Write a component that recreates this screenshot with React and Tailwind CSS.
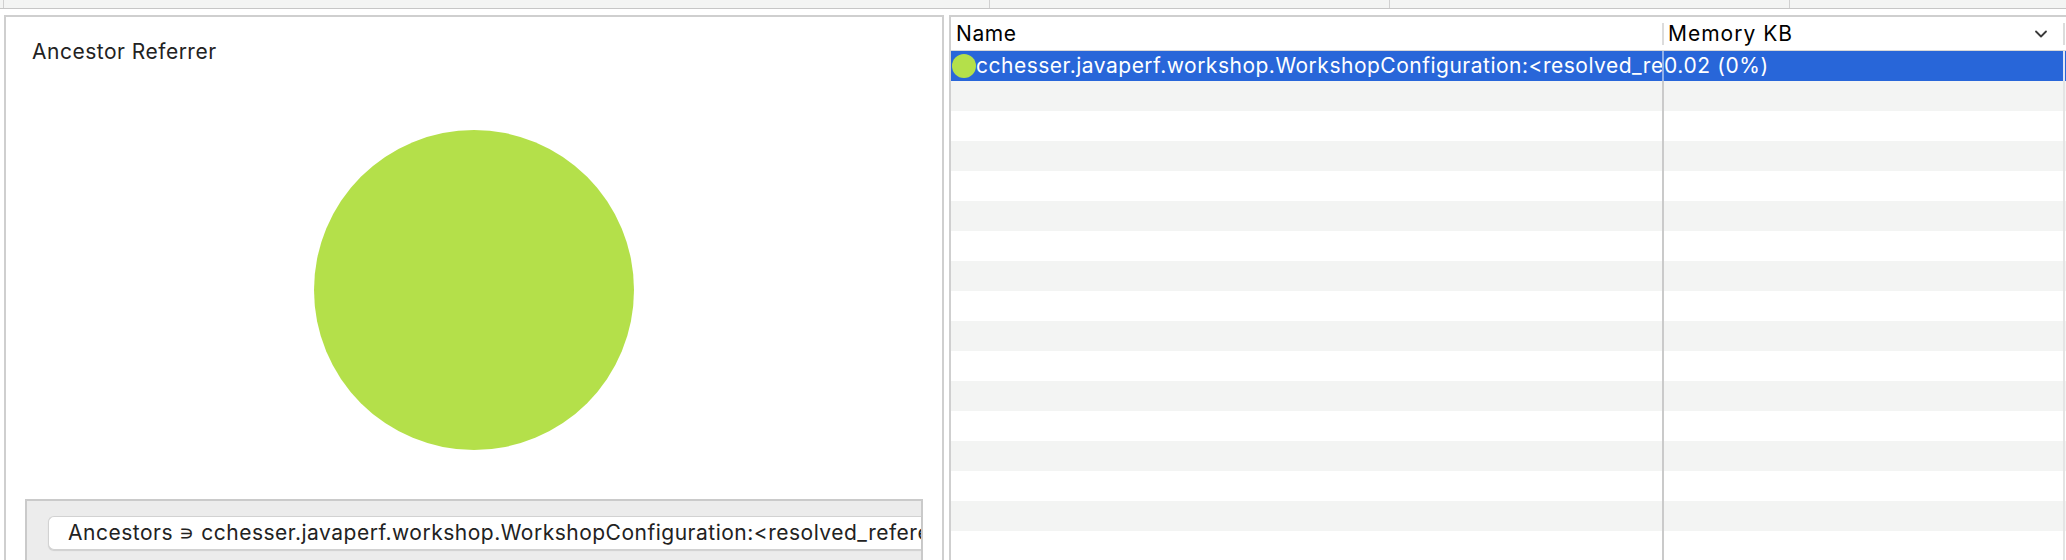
import { ChevronDown } from "lucide-react";

const font = { fontFamily: "Inter, 'Noto Sans', sans-serif" };

function Row({ index }) {
  const selected = index === 0;
  const stripe = index % 2 === 1;
  const bg = selected ? "bg-[#2866d9]" : stripe ? "bg-[#f3f4f3]" : "bg-white";
  return (
    <div className={`flex h-[30px] shrink-0 items-center ${bg}`}>
      <div className="flex h-full w-[711px] shrink-0 items-center overflow-hidden whitespace-nowrap">
        {selected && (
          <>
            <span className="ml-[1px] h-[24px] w-[24px] shrink-0 rounded-full bg-[#b4e04a]" />
            <span className="text-[21px] tracking-[0.5px] text-white">
              cchesser.javaperf.workshop.WorkshopConfiguration:&lt;resolved_reference&gt;
            </span>
          </>
        )}
      </div>
      <div className={`h-full w-[2px] shrink-0 ${selected ? "bg-[#8fb0ea]" : "bg-[#cacaca]"}`} />
      <div className="flex h-full w-[399px] shrink-0 items-center whitespace-nowrap">
        {selected && <span className="text-[21px] tracking-[0.6px] text-white">0.02 (0%)</span>}
      </div>
      <div className={`h-full w-[2px] shrink-0 ${selected ? "bg-[#dfe6f5]" : "bg-[#e4e4e4]"}`} />
    </div>
  );
}

export default function App() {
  const rows = Array.from({ length: 17 }, (_, i) => i);

  return (
    <div className="h-[560px] w-[2066px] overflow-hidden bg-white text-[#1d1d1d]" style={font}>
      {/* top strip */}
      <div className="flex h-[9px] border-b border-[#c6c6c6] bg-[#f3f4f3]">
        <div className="ml-[3px] w-[987px] border-l border-r border-[#d0d0d0]" />
        <div className="w-[400px] border-r border-[#d0d0d0]" />
        <div className="w-[400px] border-r border-[#d0d0d0]" />
      </div>

      <div className="mt-[6px] flex">
        {/* left panel */}
        <div className="ml-[4px] flex h-[560px] w-[940px] shrink-0 flex-col border-2 border-[#cfcfcf] border-b-0">
          <div className="pl-[26px] pt-[22px] text-[21px] leading-[26px] tracking-[0.5px] text-[#222]">Ancestor Referrer</div>
          <div className="flex justify-center pt-[65px]">
            <div className="h-[320px] w-[320px] rounded-full bg-[#b4e04a]" />
          </div>
          <div className="ml-[19px] mt-[49px] h-[80px] w-[898px] border-2 border-[#cacaca] bg-[#ececec] pl-[21px] pt-[15px]">
            <div className="flex h-[34px] items-center overflow-hidden whitespace-nowrap rounded-l-[6px] border border-r-0 border-[#d2d2d2] bg-white pl-[19px] text-[21px] tracking-[0.5px] text-[#222] shadow-[0_1px_1px_rgba(0,0,0,0.12)]">
              Ancestors ∍ cchesser.javaperf.workshop.WorkshopConfiguration:&lt;resolved_reference&gt;
            </div>
          </div>
        </div>

        {/* right panel */}
        <div className="ml-[5px] flex h-[560px] flex-1 flex-col border-l-2 border-t-2 border-[#cfcfcf]">
          <div className="flex h-[34px] shrink-0 items-center border-b border-[#d8d8d8] bg-white">
            <div className="w-[711px] shrink-0 pl-[5px] text-[21px] tracking-[0.6px] text-black">Name</div>
            <div className="h-[22px] w-[2px] shrink-0 bg-[#dcdcdc]" />
            <div className="flex w-[399px] shrink-0 items-center justify-between pl-[4px] pr-[12px] text-[21px] tracking-[1px] text-black">
              <span>Memory KB</span>
              <ChevronDown size={20} strokeWidth={2.2} className="text-[#3a3a3a]" />
            </div>
            <div className="h-[22px] w-[2px] shrink-0 bg-[#dcdcdc]" />
          </div>
          {rows.map((i) => (
            <Row key={i} index={i} />
          ))}
        </div>
      </div>
    </div>
  );
}
